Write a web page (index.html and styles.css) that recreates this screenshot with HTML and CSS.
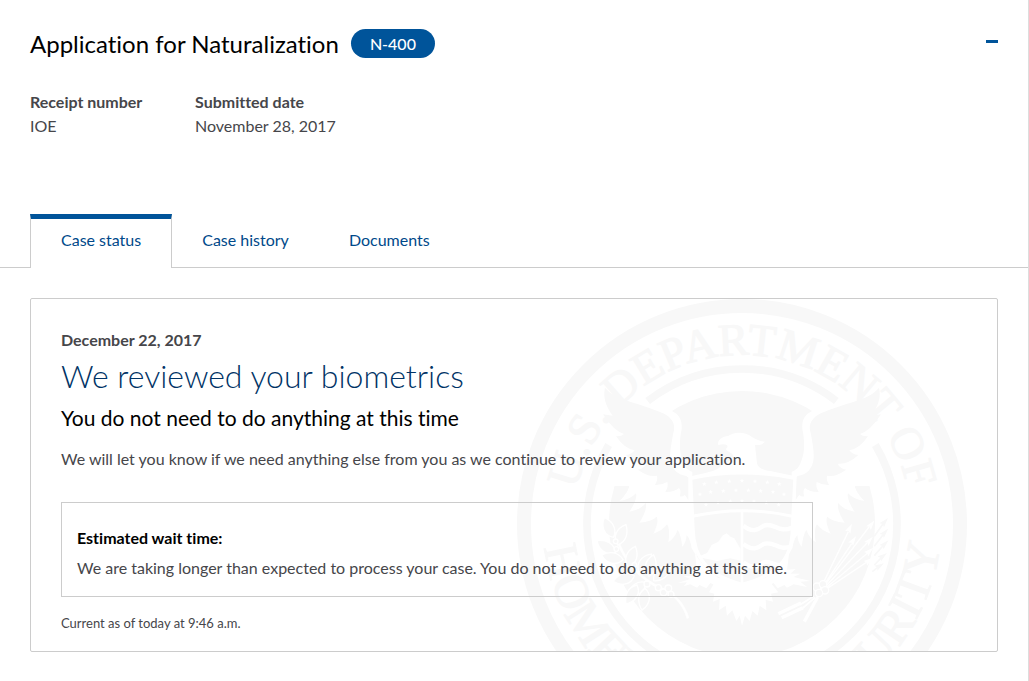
FILE: index.html
```html
<!DOCTYPE html>
<html lang="en">
<head>
    <meta charset="UTF-8">
    <title>Application for Naturalization</title>
    <link rel="stylesheet" href="styles.css">
</head>
<body>
    <main class="case">
        <header class="case-header">
            <h1>Application for Naturalization</h1>
            <span class="form-badge">N-400</span>
            <button class="collapse" type="button" aria-label="Collapse case" aria-expanded="true"></button>
        </header>

        <dl class="case-meta">
            <div class="meta-item">
                <dt>Receipt number</dt>
                <dd>IOE</dd>
            </div>
            <div class="meta-item">
                <dt>Submitted date</dt>
                <dd>November 28, 2017</dd>
            </div>
        </dl>

        <nav class="tabs">
            <a class="tab active" href="#status">Case status</a>
            <a class="tab" href="#history">Case history</a>
            <a class="tab" href="#documents">Documents</a>
        </nav>

        <section class="status-card" id="status">
            <svg class="seal" viewBox="0 0 1350 1350" aria-hidden="true">
                <defs>
                    <path id="arc-top" d="M168 675 A507 507 0 0 1 1182 675"/>
                    <path id="arc-bottom" d="M78 675 A597 597 0 0 0 1272 675"/>
                    <path id="star" d="M0 -7 L2 -2 L7 -2 L3 1 L4 6 L0 3 L-4 6 L-3 1 L-7 -2 L-2 -2 Z"/>
                    <path id="head" d="M0 -20 L9 9 L0 4 L-9 9 Z"/>
                    <path id="leaf" d="M0 0 C-24 -16 -22 -46 0 -66 C18 -44 20 -18 0 0 Z"/>
                    <g id="wing">
                        <path class="cut" d="M464 335 C486 347 496 360 494 390 C487 425 486 460 497 485 C503 504 512 514 526 518 L526 640 L540 775 L524 748 Q520 722 509 708 Q508 728 496 744 Q492 708 482 692 Q474 716 454 730 Q460 690 450 676 Q438 694 409 704 Q427 668 419 653 Q404 668 367 671 Q392 632 386 612 Q372 632 337 638 Q362 602 357 583 Q340 602 307 606 Q330 584 337 561 L220 561 L220 300 Z"/>
                        <path class="ink" d="M264 266 C282 286 300 295 330 305 C380 321 425 334 448 348 C466 360 474 375 471 393 C464 425 457 465 461 485 C466 510 480 526 508 531 L514 536 L514 604 Q508 592 503 588 Q496 594 488 592 Q494 575 486 567 Q470 580 445 579 Q455 562 451 549 Q432 559 414 558 Q424 540 419 530 Q398 536 362 512 Q382 508 388 494 Q357 497 326 468 Q345 466 353 454 Q323 450 297 412 Q313 413 321 405 Q291 397 258 346 L287 350 C264 318 258 292 264 266 Z"/>
                        <path class="ink" d="M337 561 L294 561 L282 620 L307 606 Q330 584 337 561 Z"/>
                    </g>
                </defs>

                <circle class="ink" cx="675" cy="675" r="399"/>
                <use href="#wing"/>
                <use href="#wing" transform="translate(1350 0) scale(-1 1)"/>

                <!-- outer band and inner ring, the ring is open behind the wings -->
                <circle class="line" cx="675" cy="675" r="654" stroke-width="42"/>
                <path class="line" d="M392 306 A465 465 0 0 1 958 306" stroke-width="23"/>
                <path class="line" d="M275 438 A465 465 0 1 0 1075 438" stroke-width="23"/>

                <text class="seal-text"><textPath href="#arc-top" startOffset="50%" text-anchor="middle">U.S. DEPARTMENT OF</textPath></text>
                <text class="seal-text large"><textPath href="#arc-bottom" startOffset="70">HOMELAND</textPath></text>
                <text class="seal-text large"><textPath href="#arc-bottom" startOffset="1812" text-anchor="end">SECURITY</textPath></text>

                <!-- head, legs and tail -->
                <path class="cut" d="M604 438 C600 424 614 413 634 411 C646 399 684 396 704 413 C716 421 728 426 744 428 C736 437 726 439 714 438 L720 493 C722 506 734 512 760 516 L835 532 L675 530 L516 534 C560 522 600 518 612 502 C620 491 650 488 650 472 C644 458 634 462 626 450 C640 440 626 432 604 438 Z"/>
                <path class="cut" d="M534 765 L560 800 L620 850 L600 862 L580 852 L568 868 L548 858 L540 866 L520 856 L500 862 L510 850 L482 852 L520 840 L500 832 L530 830 L514 816 L540 816 Z"/>
                <path class="cut" d="M816 765 L790 800 L730 850 L750 862 L770 852 L782 868 L802 858 L810 866 L830 856 L870 864 L850 848 L880 846 L830 834 L850 824 L820 824 L836 810 L810 812 Z"/>
                <path class="cut" d="M600 838 L576 880 L592 884 L588 908 L608 900 L606 934 L626 920 L630 950 L646 934 L658 966 L668 950 L675 980 L684 950 L698 966 L706 936 L722 950 L728 920 L748 934 L746 902 L768 908 L762 884 L784 880 L750 838 Z"/>

                <!-- shield -->
                <path class="ink edge" d="M521 538 Q677 505 834 538 L826 690 C826 780 780 830 675 856 C575 830 530 780 528 690 Z"/>
                <path class="cut-line" d="M526 652 Q677 618 826 652" stroke-width="9"/>
                <path class="cut-line" d="M675 634 V854" stroke-width="8"/>
                <path class="cut" d="M540 775 L570 762 L584 738 L604 728 L616 710 L629 703 L642 714 L652 718 L671 750 L671 785 L640 778 L600 786 L560 778 Z"/>
                <path class="cut-line" d="M679 680 C710 704 725 690 740 680 C770 668 785 704 824 686 M679 735 C710 759 725 745 740 735 C770 723 785 759 824 741 M679 790 C710 814 725 800 740 790 C760 782 780 808 802 796" stroke-width="13"/>
                <g class="cut">
                    <use href="#star" x="562" y="555"/><use href="#star" x="598" y="550"/><use href="#star" x="637" y="547"/><use href="#star" x="675" y="545"/><use href="#star" x="714" y="547"/><use href="#star" x="751" y="550"/><use href="#star" x="787" y="555"/>
                    <use href="#star" x="549" y="586"/><use href="#star" x="581" y="579"/><use href="#star" x="619" y="576"/><use href="#star" x="657" y="574"/><use href="#star" x="694" y="574"/><use href="#star" x="731" y="576"/><use href="#star" x="768" y="579"/><use href="#star" x="801" y="586"/>
                    <use href="#star" x="567" y="617"/><use href="#star" x="603" y="611"/><use href="#star" x="640" y="607"/><use href="#star" x="675" y="606"/><use href="#star" x="711" y="607"/><use href="#star" x="748" y="611"/><use href="#star" x="785" y="617"/>
                </g>

                <!-- olive branch -->
                <path class="cut-line" d="M513 958 C500 915 478 890 440 872 C370 842 320 790 292 700" stroke-width="8"/>
                <g class="leaves">
                    <use href="#leaf" transform="translate(290 715) rotate(-25)"/>
                    <use href="#leaf" transform="translate(302 738) rotate(22)"/>
                    <use href="#leaf" transform="translate(296 760) rotate(-58)"/>
                    <use href="#leaf" transform="translate(318 782) rotate(-78)"/>
                    <use href="#leaf" transform="translate(335 805) rotate(18)"/>
                    <use href="#leaf" transform="translate(352 830) rotate(-105)"/>
                    <use href="#leaf" transform="translate(366 820) rotate(34)"/>
                    <use href="#leaf" transform="translate(386 850) rotate(-125)"/>
                    <use href="#leaf" transform="translate(396 832) rotate(12)"/>
                    <use href="#leaf" transform="translate(384 868) rotate(-172)"/>
                    <use href="#leaf" transform="translate(360 858) rotate(-150)"/>
                    <use href="#leaf" transform="translate(410 845) rotate(50)"/>
                    <circle cx="296" cy="727" r="7"/><circle cx="298" cy="750" r="7"/><circle cx="352" cy="798" r="7"/>
                    <circle cx="390" cy="855" r="9"/><circle cx="424" cy="866" r="9"/><circle cx="440" cy="880" r="10"/><circle cx="454" cy="868" r="10"/><circle cx="462" cy="886" r="9"/>
                </g>

                <!-- arrows -->
                <path class="cut-line" d="M912 866 L994 698 M914 868 L1004 734 M916 868 L1056 684 M918 870 L1050 732 M920 872 L1052 762 M922 874 L1048 790" stroke-width="4"/>
                <g class="cut">
                    <use href="#head" transform="translate(996 692) rotate(26)"/>
                    <use href="#head" transform="translate(1006 728) rotate(34)"/>
                    <use href="#head" transform="translate(1060 680) rotate(38)"/>
                    <use href="#head" transform="translate(1054 728) rotate(42)"/>
                    <use href="#head" transform="translate(1054 760) rotate(48)"/>
                    <use href="#head" transform="translate(1052 788) rotate(54)"/>
                </g>
                <path class="line" d="M1072 712 L1100 672 M1072 742 L1100 705 M1072 770 L1100 738 M1072 798 L1094 775 M1066 818 L1086 802" stroke-width="5"/>
                <g class="ink">
                    <use href="#head" transform="translate(1100 672) rotate(40)"/>
                    <use href="#head" transform="translate(1100 704) rotate(42)"/>
                    <use href="#head" transform="translate(1100 738) rotate(46)"/>
                    <use href="#head" transform="translate(1094 774) rotate(52)"/>
                    <use href="#head" transform="translate(1084 803) rotate(58)"/>
                </g>
                <path class="cut-line" d="M890 892 L848 918 M894 896 L854 930" stroke-width="5"/>
                <path class="cut-line" d="M852 912 L784 944 M858 926 L794 956 M902 894 L862 968" stroke-width="10"/>
                <g class="leaves">
                    <circle cx="900" cy="864" r="12"/><circle cx="918" cy="856" r="11"/><circle cx="924" cy="874" r="11"/><circle cx="906" cy="882" r="11"/>
                </g>
            </svg>

            <p class="status-date">December 22, 2017</p>
            <h2>We reviewed your biometrics</h2>
            <h3>You do not need to do anything at this time</h3>
            <p class="status-text">We will let you know if we need anything else from you as we continue to review your application.</p>

            <div class="wait-box">
                <h4>Estimated wait time:</h4>
                <p>We are taking longer than expected to process your case. You do not need to do anything at this time.</p>
            </div>

            <p class="updated">Current as of today at 9:46 a.m.</p>
        </section>
    </main>
</body>
</html>
```
FILE: styles.css
```css
* {box-sizing: border-box}
body {margin: 0; font-family: Lato, "Open Sans", sans-serif; font-size: 16px; line-height: 24px; font-variant-ligatures: none; color: #46464a; background: #fff}
h1, h2, h3, h4, p, dl, dd {margin: 0}

.case {min-height: 100vh; padding-bottom: 29px; border-right: 1px solid #ddd}

.case-header {display: flex; align-items: center; padding: 29px 30px 0}
h1 {font-size: 24px; line-height: 29px; font-weight: 400; color: #000}
.form-badge {margin-left: 12px; padding: 0 19px; border-radius: 15px; background: #00549a; color: #fff; line-height: 29px; font-weight: 500}
.collapse {margin-left: auto; width: 12px; height: 24px; padding: 0; border: none; background: linear-gradient(#00549a, #00549a) center 8px / 12px 3px no-repeat; cursor: pointer}

.case-meta {display: flex; padding: 32px 30px 0}
.meta-item {min-width: 165px}
.meta-item dt {font-weight: 700}

.tabs {display: flex; margin-top: 76px; padding-left: 30px; box-shadow: inset 0 -1px #ccc}
.tab {height: 54px; padding: 14px 30px 0; color: #00498a; text-decoration: none}
.tab.active {padding-top: 9px; border: 1px solid #ccc; border-top: 5px solid #00549a; border-bottom: none; background: #fff}

.status-card {position: relative; overflow: hidden; margin: 30px 30px 0; padding: 29px 30px 16px; border: 1px solid #ccc; border-radius: 2px}
.status-card > * {position: relative}
.status-date {font-weight: 700}
h2 {margin-top: 4px; font-size: 32px; line-height: 40px; font-weight: 300; color: #003366}
h3 {margin-top: 7px; font-size: 21px; line-height: 30px; font-weight: 400; color: #000}
.status-text {margin-top: 14px}
.wait-box {width: 83%; margin-top: 31px; padding: 23px 15px 16px; border: 1px solid #ccc}
.wait-box h4 {font-size: 16px; font-weight: 700; color: #000}
.wait-box p {margin-top: 6px}
.updated {margin-top: 14px; font-size: 13px}

/* watermark behind the status text */
.status-card > .seal {position: absolute; top: 0; right: 30px; width: 450px; height: 450px}
.ink {fill: #f8f8f8}
.cut {fill: #fff}
.line {fill: none; stroke: #f8f8f8}
.cut-line {fill: none; stroke: #fff}
.edge {stroke: #fff; stroke-width: 10}
.leaves {fill: #f8f8f8; stroke: #fff; stroke-width: 4}
.seal-text {font-family: "Liberation Serif", serif; font-size: 137px; fill: #f8f8f8; stroke: #f8f8f8; stroke-width: 3}
.seal-text.large {font-size: 144px}
```
